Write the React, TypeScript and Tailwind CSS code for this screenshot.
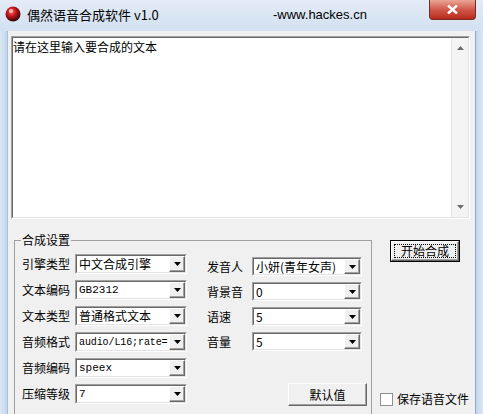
const sunken = 'border border-t-[#a0a0a0] border-l-[#a0a0a0] border-b-white border-r-white'
const sunkenInner = 'border border-t-[#696969] border-l-[#696969] border-b-[#e3e3e3] border-r-[#e3e3e3]'
const raised =
  'border border-t-white border-l-white border-b-[#696969] border-r-[#696969] shadow-[inset_-1px_-1px_0_#a0a0a0]'

function AppIcon() {
  return (
    <svg width="16" height="16" viewBox="0 0 16 16">
      <defs>
        <radialGradient id="ball" cx="0.4" cy="0.35" r="0.7">
          <stop offset="0%" stopColor="#ff6a5a" />
          <stop offset="45%" stopColor="#c0121a" />
          <stop offset="100%" stopColor="#1a0404" />
        </radialGradient>
      </defs>
      <circle cx="8" cy="8" r="7.5" fill="url(#ball)" />
      <circle cx="6" cy="5" r="2" fill="#ffd6d0" opacity="0.8" />
    </svg>
  )
}

function DropArrow() {
  return (
    <svg width="7" height="4" viewBox="0 0 7 4">
      <path d="M0 0h7L3.5 4z" fill="#000" />
    </svg>
  )
}

function Combo({ value, className, mono }: { value: string; className: string; mono?: 'sm' | 'md' }) {
  const monoCls =
    mono === 'sm'
      ? "font-['Liberation_Mono',monospace] text-[10px] tracking-[-0.1px] pl-[1px]"
      : mono === 'md'
        ? "font-['Liberation_Mono',monospace] text-[11px]"
        : ''
  return (
    <div className={`${sunken} ${className} shrink-0`}>
      <div className={`${sunkenInner} h-full flex bg-white`}>
        <div className={`flex-1 overflow-hidden whitespace-nowrap pl-[2px] flex items-center ${monoCls}`}>{value}</div>
        <div className={`${raised} w-[16px] bg-[#f0f0f0] flex items-center justify-center`}>
          <DropArrow />
        </div>
      </div>
    </div>
  )
}

function Row1({ label, value, mono }: { label: string; value: string; mono?: 'sm' | 'md' }) {
  return (
    <div className="flex items-center">
      <span className="w-[53px] leading-[14px]">{label}</span>
      <Combo value={value} mono={mono} className="w-[112px] h-[20px]" />
    </div>
  )
}

function Row2({ label, value }: { label: string; value: string }) {
  return (
    <div className="flex items-center">
      <span className="w-[45px] leading-[14px]">{label}</span>
      <Combo value={value} className="w-[110px] h-[19px]" />
    </div>
  )
}

export default function App() {
  return (
    <div className="w-[483px] h-[414px] overflow-hidden flex flex-col bg-[#cbdcef] font-['Noto_Sans_CJK_SC',sans-serif] text-[12px] text-black">
      {/* Title bar */}
      <div className="h-[31px] shrink-0 flex items-start bg-gradient-to-b from-[#e3ecf7] to-[#d2e0f0]">
        <div className="ml-[5px] mt-[6px]">
          <AppIcon />
        </div>
        <span className="w-[252px] pl-[6px] mt-[6px] text-[13px] leading-[18px]">偶然语音合成软件 v1.0</span>
        <span className="w-[156px] mt-[6px] text-[13px] leading-[18px] font-['Liberation_Sans',sans-serif]">
          -www.hackes.cn
        </span>
        <div className="w-[47px] h-[20px] rounded-b-[4px] border border-t-0 border-[#7a2a20] bg-gradient-to-b from-[#e9a597] via-[#d0584a] to-[#b8281a] flex items-center justify-center">
          <svg width="11" height="9" viewBox="0 0 11 9">
            <path d="M1 0.5L10 8.5M10 0.5L1 8.5" stroke="#fff" strokeWidth="2.4" />
          </svg>
        </div>
      </div>

      <div className="flex flex-1">
        <div className="w-[8px] bg-gradient-to-r from-[#dce7f4] to-[#c2d6ec] border-r border-[#a9bdd4]" />

        {/* Client */}
        <div className="w-[467px] bg-[#f0f0f0] flex flex-col">
          {/* Edit box */}
          <div className={`${sunken} ml-[3px] mt-[5px] w-[459px] h-[183px]`}>
            <div className={`${sunkenInner} h-full flex bg-white`}>
              <div className="flex-1 pt-[1px] leading-[16px]">请在这里输入要合成的文本</div>
              <div className="w-[17px] bg-[#f4f4f4] border-l border-[#e6e6e6] flex flex-col justify-between items-center py-[8px]">
                <svg width="7" height="4" viewBox="0 0 7 4">
                  <path d="M0 4h7L3.5 0z" fill="#6a6a6a" />
                </svg>
                <svg width="7" height="4" viewBox="0 0 7 4">
                  <path d="M0 0h7L3.5 4z" fill="#6a6a6a" />
                </svg>
              </div>
            </div>
          </div>

          <div className="mt-[14px] flex items-start">
            {/* Group box */}
            <fieldset className="ml-[6px] w-[358px] h-[200px] border border-[#a0a0a0]">
              <legend className="ml-[6px] px-[1px] leading-[14px]">合成设置</legend>
              <div className="flex pl-[7px] pt-[7px]">
                <div className="flex flex-col gap-[6px]">
                  <Row1 label="引擎类型" value="中文合成引擎" />
                  <Row1 label="文本编码" value="GB2312" mono="md" />
                  <Row1 label="文本类型" value="普通格式文本" />
                  <Row1 label="音频格式" value="audio/L16;rate=" mono="sm" />
                  <Row1 label="音频编码" value="speex" mono="md" />
                  <Row1 label="压缩等级" value="7" mono="md" />
                </div>
                <div className="ml-[20px] pt-[3px] flex flex-col gap-[6px]">
                  <Row2 label="发音人" value="小妍(青年女声)" />
                  <Row2 label="背景音" value="0" />
                  <Row2 label="语速" value="5" />
                  <Row2 label="音量" value="5" />
                  <div className={`${raised} ml-[81px] mt-[26px] w-[79px] h-[23px] bg-[#f0f0f0] flex items-center justify-center`}>
                    默认值
                  </div>
                </div>
              </div>
            </fieldset>

            {/* Right column */}
            <div className="ml-[8px] flex flex-col">
              <div className="ml-[10px] mt-[7px] w-[70px] h-[22px] border border-black">
                <div className={`${raised} h-full bg-[#f0f0f0] p-[2px]`}>
                  <div className="h-full border border-dotted border-black flex items-center justify-center">
                    开始合成
                  </div>
                </div>
              </div>
              <div className="mt-[130px] flex items-center gap-[4px]">
                <div className="w-[13px] h-[13px] bg-white border border-[#8e8f8f]" />
                <span className="leading-[14px]">保存语音文件</span>
              </div>
            </div>
          </div>
        </div>

        <div className="flex-1 bg-gradient-to-r from-[#c2d6ec] to-[#dce7f4] border-l border-[#8fa9c6]" />
      </div>
    </div>
  )
}
